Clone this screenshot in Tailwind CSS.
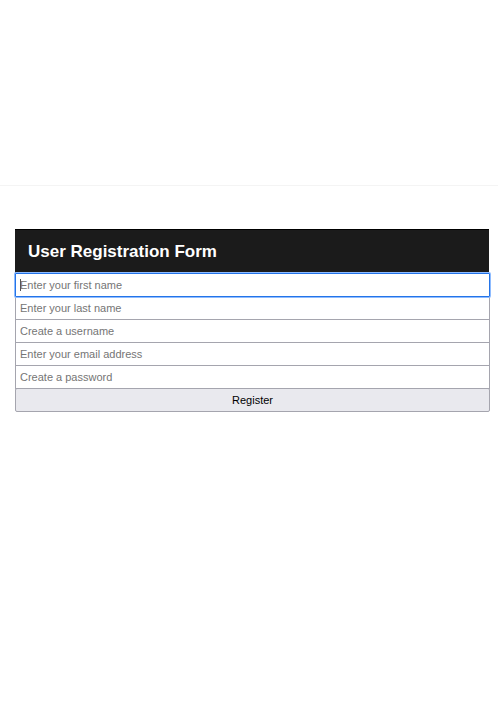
<!DOCTYPE html>
<html lang="en">
<head>
<meta charset="utf-8">
<meta name="viewport" content="width=device-width, initial-scale=1">
<title>User Registration Form</title>
<script src="https://cdn.jsdelivr.net/npm/@tailwindcss/browser@4"></script>
</head>
<body class="min-h-screen bg-white font-['Liberation_Sans',Arial,sans-serif] text-[11px]">
<div class="mr-[2px] h-[186px] border-b border-[#f4f4f4]"></div>
<main class="mt-[43px] mr-[10px] ml-[15px]">
  <h1 class="mr-px border-t border-black bg-[#1b1b1b] px-[13px] pt-[11px] pb-[11px] text-[17px] leading-[22px] font-bold text-white">User Registration Form</h1>
  <form class="flex flex-col">
    <div class="relative z-10 -mt-px flex flex-col">
      <input type="text" aria-label="First name" placeholder="Enter your first name" class="h-[24px] rounded-[1px] border border-[#2474e8] bg-white px-[4px] ring-1 ring-[#8fbcff] caret-transparent outline-none placeholder:text-[#757575]">
      <span aria-hidden="true" class="absolute top-[6px] left-[5px] h-3 w-px bg-[#555555]"></span>
    </div>
    <input type="text" aria-label="Last name" placeholder="Enter your last name" class="-mt-px h-[24px] border border-[#a5a5ae] bg-white px-[4px] placeholder:text-[#757575]">
    <input type="text" aria-label="Username" placeholder="Create a username" class="-mt-px h-[24px] border border-[#a5a5ae] bg-white px-[4px] placeholder:text-[#757575]">
    <input type="email" aria-label="Email address" placeholder="Enter your email address" class="-mt-px h-[24px] border border-[#a5a5ae] bg-white px-[4px] placeholder:text-[#757575]">
    <input type="password" aria-label="Password" placeholder="Create a password" class="-mt-px h-[24px] border border-[#a5a5ae] bg-white px-[4px] placeholder:text-[#757575]">
    <button type="submit" class="-mt-px h-[24px] rounded-[2px] border border-[#a5a5ae] bg-[#e9e9ee] text-black">Register</button>
  </form>
</main>
</body>
</html>
